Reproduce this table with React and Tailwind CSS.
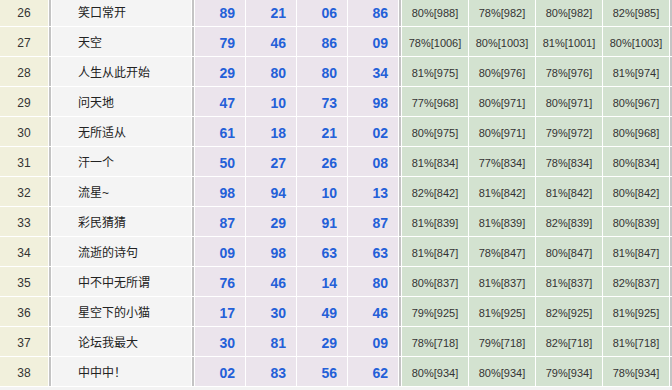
import React from 'react';

const rows = [
    [26, '笑口常开', ['89', '21', '06', '86'], ['80%[988]', '78%[982]', '80%[982]', '82%[985]']],
    [27, '天空', ['79', '46', '86', '09'], ['78%[1006]', '80%[1003]', '81%[1001]', '80%[1003]']],
    [28, '人生从此开始', ['29', '80', '80', '34'], ['81%[975]', '80%[976]', '78%[976]', '81%[974]']],
    [29, '问天地', ['47', '10', '73', '98'], ['77%[968]', '80%[971]', '80%[971]', '80%[967]']],
    [30, '无所适从', ['61', '18', '21', '02'], ['80%[975]', '80%[971]', '79%[972]', '80%[968]']],
    [31, '汗一个', ['50', '27', '26', '08'], ['81%[834]', '77%[834]', '78%[834]', '80%[834]']],
    [32, '流星~', ['98', '94', '10', '13'], ['82%[842]', '81%[842]', '81%[842]', '80%[842]']],
    [33, '彩民猜猜', ['87', '29', '91', '87'], ['81%[839]', '81%[839]', '82%[839]', '80%[839]']],
    [34, '流逝的诗句', ['09', '98', '63', '63'], ['81%[847]', '78%[847]', '80%[847]', '81%[847]']],
    [35, '中不中无所谓', ['76', '46', '14', '80'], ['80%[837]', '81%[837]', '81%[837]', '82%[837]']],
    [36, '星空下的小猫', ['17', '30', '49', '46'], ['79%[925]', '81%[925]', '82%[925]', '81%[925]']],
    [37, '论坛我最大', ['30', '81', '29', '09'], ['78%[718]', '79%[718]', '82%[718]', '81%[718]']],
    [38, '中中中！', ['02', '83', '56', '62'], ['80%[934]', '80%[934]', '79%[934]', '78%[934]']],
];

const Sep = () => <div className="bg-[#c4c4c4]" />;

const App = () => {
    return (
        <div className="w-[672px] h-[390px] overflow-hidden bg-[#f3f3f3]" style={{ fontFamily: '"Liberation Sans", "Noto Sans CJK SC", sans-serif' }}>
            <div className="-mt-[3px] bg-white pb-px grid grid-cols-[48px_2px_139px_2px_50px_50px_50px_50px_2px_66px_66px_66px_66px_2px] auto-rows-[29px] gap-px">
                {rows.map(([num, name, picks, rates]) => (
                    <React.Fragment key={num}>
                        <div className="bg-[#f1f0dc] flex items-center justify-center text-[12px] text-[#333] pt-[3px]">
                            {num}
                        </div>
                        <Sep />
                        <div className="bg-[#f4f4f4] flex items-center pl-[26px] text-[12px] text-[#222] pt-[2px]">
                            {name}
                        </div>
                        <Sep />
                        {picks.map((p, i) => (
                            <div key={i} className="bg-[#ebe4ec] flex items-center justify-end pr-[10px] text-[14px] font-bold text-[#2460d8] pt-[3px]">
                                {p}
                            </div>
                        ))}
                        <Sep />
                        {rates.map((r, i) => (
                            <div key={i} className="bg-[#d3e2d0] flex items-center justify-center text-[11px] text-[#333] pt-[3px]">
                                {r}
                            </div>
                        ))}
                        <Sep />
                    </React.Fragment>
                ))}
            </div>
        </div>
    );
};

export default App;
